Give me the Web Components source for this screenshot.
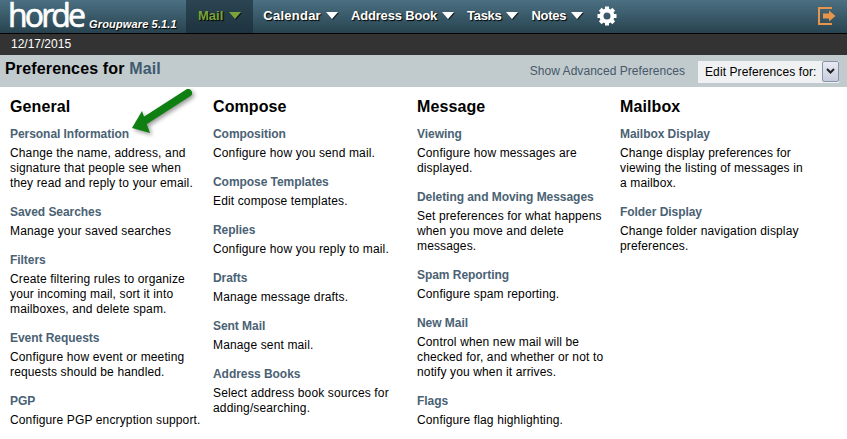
<!DOCTYPE html>
<html>
<head>
<meta charset="utf-8">
<title>Preferences for Mail</title>
<style>
html, body { margin: 0; padding: 0; background: #fff; }
body { font-family: "Liberation Sans", Arial, sans-serif; font-size: 12px; overflow: hidden; height: 439px; }
</style>
</head>
<body>
<horde-topbar>
    <nav-item active>Mail</nav-item>
    <nav-item style="--ls: .25px">Calendar</nav-item>
    <nav-item style="--ls: -.17px">Address Book</nav-item>
    <nav-item style="--ls: -.3px">Tasks</nav-item>
    <nav-item style="--ls: -.3px">Notes</nav-item>
</horde-topbar>
<date-bar>12/17/2015</date-bar>
<prefs-header></prefs-header>
<prefs-page>
    <pref-column heading="General">
        <pref-item title="Personal Information">Change the name, address, and signature that people see when they read and reply to your email.</pref-item>
        <pref-item title="Saved Searches">Manage your saved searches</pref-item>
        <pref-item title="Filters">Create filtering rules to organize your incoming mail, sort it into mailboxes, and delete spam.</pref-item>
        <pref-item title="Event Requests">Configure how event or meeting requests should be handled.</pref-item>
        <pref-item title="PGP">Configure PGP encryption support.</pref-item>
    </pref-column>
    <pref-column heading="Compose">
        <pref-item title="Composition">Configure how you send mail.</pref-item>
        <pref-item title="Compose Templates">Edit compose templates.</pref-item>
        <pref-item title="Replies">Configure how you reply to mail.</pref-item>
        <pref-item title="Drafts">Manage message drafts.</pref-item>
        <pref-item title="Sent Mail">Manage sent mail.</pref-item>
        <pref-item title="Address Books">Select address book sources for adding/searching.</pref-item>
    </pref-column>
    <pref-column heading="Message">
        <pref-item title="Viewing">Configure how messages are displayed.</pref-item>
        <pref-item title="Deleting and Moving Messages">Set preferences for what happens when you move and delete messages.</pref-item>
        <pref-item title="Spam Reporting">Configure spam reporting.</pref-item>
        <pref-item title="New Mail">Control when new mail will be checked for, and whether or not to notify you when it arrives.</pref-item>
        <pref-item title="Flags">Configure flag highlighting.</pref-item>
    </pref-column>
    <pref-column heading="Mailbox">
        <pref-item title="Mailbox Display">Change display preferences for viewing the listing of messages in a mailbox.</pref-item>
        <pref-item title="Folder Display">Change folder navigation display preferences.</pref-item>
    </pref-column>
    <green-arrow></green-arrow>
</prefs-page>
<script>
class HordeTopbar extends HTMLElement {
    constructor() {
        super();
        this.attachShadow({ mode: 'open' });
        this.shadowRoot.innerHTML = `
            <style>
                :host {
                    display: flex;
                    height: 33px;
                    background: linear-gradient(#4b7082, #28434f);
                    border-bottom: 1px solid #000;
                    color: #fff;
                }
                .logo {
                    display: flex;
                    align-items: flex-start;
                    width: 186px;
                    flex: none;
                    box-sizing: border-box;
                    padding-left: 9px;
                }
                .word { display: block; flex: none; }
                .word text {
                    font: 400 32px "Open Sans", sans-serif;
                    fill: #fff;
                    stroke: #fff;
                    stroke-width: .7px;
                    stroke-linejoin: round;
                }
                .ver {
                    font: italic bold 11px/13px "Liberation Sans", sans-serif;
                    letter-spacing: .15px;
                    margin-top: 18px;
                    text-shadow: 1px 1px 1px #000;
                    white-space: nowrap;
                }
                nav { display: flex; flex: 1; }
                .gear { display: block; margin: 6px 0 0 8px; }
                .exit { display: block; margin: 6px 11px 0 auto; }
            </style>
            <div class="logo">
                <svg class="word" width="80" height="33" viewBox="0 0 80 33"><text x="-1" y="27" textLength="78" lengthAdjust="spacing">horde</text></svg>
                <span class="ver">Groupware 5.1.1</span>
            </div>
            <nav>
                <slot></slot>
                <svg class="gear" width="20" height="20" viewBox="0 0 20 20" fill="#fff">
                    <circle cx="10" cy="10" r="5.500" fill="none" stroke="#fff" stroke-width="4"/>
                    <rect x="8" y="0.500" width="4" height="4"/>
                    <rect x="8" y="0.500" width="4" height="4" transform="rotate(45 10 10)"/>
                    <rect x="8" y="0.500" width="4" height="4" transform="rotate(90 10 10)"/>
                    <rect x="8" y="0.500" width="4" height="4" transform="rotate(135 10 10)"/>
                    <rect x="8" y="0.500" width="4" height="4" transform="rotate(180 10 10)"/>
                    <rect x="8" y="0.500" width="4" height="4" transform="rotate(225 10 10)"/>
                    <rect x="8" y="0.500" width="4" height="4" transform="rotate(270 10 10)"/>
                    <rect x="8" y="0.500" width="4" height="4" transform="rotate(315 10 10)"/>
                </svg>
                <svg class="exit" width="18" height="20" viewBox="0 0 18 20">
                    <path fill="none" stroke="#e8944a" stroke-width="2" d="M14 2H1v16h13"/>
                    <path fill="#e8944a" d="M5 7.500h6V4.500l6.500 5.500-6.500 5.500v-3H5z"/>
                </svg>
            </nav>
        `;
    }
}
customElements.define('horde-topbar', HordeTopbar);

class NavItem extends HTMLElement {
    constructor() {
        super();
        this.attachShadow({ mode: 'open' });
        this.shadowRoot.innerHTML = `
            <style>
                :host {
                    display: flex;
                    align-items: center;
                    gap: 5px;
                    height: 33px;
                    padding: 0 6px 3px 7px;
                    box-sizing: border-box;
                    font: bold 13px "Liberation Sans", sans-serif;
                    letter-spacing: var(--ls, 0);
                    text-shadow: 1px 1px 1px #000;
                }
                :host([active]) {
                    background: linear-gradient(#2c4552, #1d333f);
                    color: #7aa33a;
                    padding: 0 12px 3px 12px;
                    margin-right: 3px;
                    gap: 6px;
                }
                i {
                    width: 0; height: 0;
                    border-left: 6px solid transparent;
                    border-right: 6px solid transparent;
                    border-top: 7px solid currentColor;
                    filter: drop-shadow(1px 1px 0 rgba(0,0,0,.6));
                }
            </style>
            <slot></slot><i></i>
        `;
    }
}
customElements.define('nav-item', NavItem);

class DateBar extends HTMLElement {
    constructor() {
        super();
        this.attachShadow({ mode: 'open' });
        this.shadowRoot.innerHTML = `
            <style>
                :host {
                    display: block;
                    height: 21px;
                    line-height: 21px;
                    background: #333;
                    color: #fff;
                    padding-left: 11px;
                    font-size: 12px;
                }
            </style>
            <slot></slot>
        `;
    }
}
customElements.define('date-bar', DateBar);

class PrefsHeader extends HTMLElement {
    constructor() {
        super();
        this.attachShadow({ mode: 'open' });
        this.shadowRoot.innerHTML = `
            <style>
                :host {
                    display: flex;
                    align-items: center;
                    height: 32px;
                    background: #c1cacc;
                    padding: 0 8px 0 5px;
                    box-sizing: border-box;
                }
                h1 { font-size: 16px; margin: 0 0 5px; color: #000; font-weight: bold; letter-spacing: .15px; }
                h1 span { color: #3e5b70; }
                a { margin-left: auto; color: #46586a; font-size: 12px; letter-spacing: .05px; }
                .edit {
                    display: flex;
                    align-items: center;
                    justify-content: space-between;
                    margin: 1px 0 0 13px;
                    width: 141px;
                    height: 22px;
                    box-sizing: border-box;
                    background: #eff1f2;
                    padding: 0 0 0 7px;
                    font-size: 12px;
                    letter-spacing: .1px;
                    color: #000;
                }
                .btn {
                    width: 17px; height: 21px;
                    box-sizing: border-box;
                    border: 1px solid #8a93a8;
                    border-radius: 2px;
                    background: linear-gradient(#e8ebf4, #c8cddd);
                    display: flex; align-items: center; justify-content: center;
                }
            </style>
            <h1>Preferences for <span>Mail</span></h1>
            <a>Show Advanced Preferences</a>
            <div class="edit">Edit Preferences for:
                <div class="btn"><svg width="9" height="7" viewBox="0 0 9 7"><path d="M1 1l3.500 3.500L8 1" fill="none" stroke="#222" stroke-width="2"/></svg></div>
            </div>
        `;
    }
}
customElements.define('prefs-header', PrefsHeader);

class PrefsPage extends HTMLElement {
    constructor() {
        super();
        this.attachShadow({ mode: 'open' });
        this.shadowRoot.innerHTML = `
            <style>
                :host {
                    display: grid;
                    position: relative;
                    grid-template-columns: 203px 204px 203px 203px;
                    padding: 10px 0 0 10px;
                }
            </style>
            <slot></slot>
        `;
    }
}
customElements.define('prefs-page', PrefsPage);

class PrefColumn extends HTMLElement {
    constructor() {
        super();
        this.attachShadow({ mode: 'open' });
        this.shadowRoot.innerHTML = `
            <style>
                :host { display: block; padding-right: 12px; }
                h2 { font-size: 16px; line-height: 20px; margin: 0 0 10px; color: #000; letter-spacing: .1px; }
            </style>
            <h2></h2>
            <slot></slot>
        `;
    }
    connectedCallback() {
        this.shadowRoot.querySelector('h2').textContent = this.getAttribute('heading');
    }
}
customElements.define('pref-column', PrefColumn);

class PrefItem extends HTMLElement {
    constructor() {
        super();
        this.attachShadow({ mode: 'open' });
        this.shadowRoot.innerHTML = `
            <style>
                :host { display: block; margin-bottom: 14px; }
                b { display: block; font-size: 12px; line-height: 15px; color: #4a6274; margin-bottom: 4px; letter-spacing: -.05px; }
                p { margin: 0; font-size: 12px; line-height: 15px; color: #000; letter-spacing: .14px; }
            </style>
            <b></b>
            <p><slot></slot></p>
        `;
    }
    connectedCallback() {
        this.shadowRoot.querySelector('b').textContent = this.getAttribute('title');
    }
}
customElements.define('pref-item', PrefItem);

class GreenArrow extends HTMLElement {
    constructor() {
        super();
        this.attachShadow({ mode: 'open' });
        this.shadowRoot.innerHTML = `
            <style>
                :host { position: absolute; left: 128px; top: 0; width: 70px; height: 52px; }
                svg { display: block; filter: drop-shadow(2px 2px 2px rgba(0,0,0,.4)); }
            </style>
            <svg width="70" height="52" viewBox="0 0 70 52">
                <path d="M60 6 L18 33" stroke="#0f7f12" stroke-width="8" stroke-linecap="round" fill="none"/>
                <path d="M4 41 L14 24 L22 46 Z" fill="#0f7f12"/>
            </svg>
        `;
    }
}
customElements.define('green-arrow', GreenArrow);
</script>
</body>
</html>
